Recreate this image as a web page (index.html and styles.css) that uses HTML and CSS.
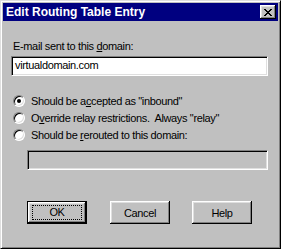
FILE: index.html
```html
<!DOCTYPE html>
<html>
<head>
    <title>Edit Routing Table Entry</title>
<link rel="stylesheet" href="styles.css">
</head>
<body>
    <div class="window">
        <div class="titlebar">
            <span class="title">Edit Routing Table Entry</span>
            <span class="close">
                <svg width="8" height="7" viewBox="0 0 8 7">
                    <path d="M0 0h2v1h1v1h2v-1h1v-1h2v1h-1v1h-1v1h-1v1h1v1h1v1h1v1h-2v-1h-1v-1h-2v1h-1v1h-2v-1h1v-1h1v-1h1v-1h-1v-1h-1v-1h-1z" fill="#000"/>
                </svg>
            </span>
        </div>

        <div class="content">
            <div class="label">E-mail sent to this <u>d</u>omain:</div>
            <div class="field">virtualdomain.com</div>

            <div class="options">
                <div class="option"><span class="radio checked"></span><span>Should be a<u>c</u>cepted as "inbound"</span></div>
                <div class="option"><span class="radio"></span><span>O<u>v</u>erride relay restrictions.&nbsp; Always "relay"</span></div>
                <div class="option"><span class="radio"></span><span>Should be <u>r</u>erouted to this domain:</span></div>
            </div>
            <div class="field disabled"></div>

            <div class="buttons">
                <div class="button default"><span class="focus">OK</span></div>
                <div class="button">Cancel</div>
                <div class="button">Help</div>
            </div>
        </div>
    </div>
</body>
</html>
```

FILE: styles.css
```css
/* Dialog window */
body {
    margin: 0;
    background-color: #c0c0c0;
    font-family: "Liberation Sans", Arial, sans-serif;
    font-size: 11px;
    letter-spacing: -0.35px;
    color: #000;
}

.window {
    width: 281px;
    height: 249px;
    box-sizing: border-box;
    padding: 2px;
    background-color: #c0c0c0;
    border: 1px solid;
    border-color: #dfdfdf #000 #000 #dfdfdf;
    box-shadow: inset 1px 1px #fff, inset -1px -1px #808080;
}

.titlebar {
    height: 18px;
    background-color: #000080;
    color: #fff;
    display: flex;
    align-items: center;
    justify-content: space-between;
    padding: 0 2px 0 3px;
}

.title {
    font-weight: bold;
    font-size: 12px;
    letter-spacing: 0;
}

.close {
    width: 16px;
    height: 14px;
    box-sizing: border-box;
    background-color: #c0c0c0;
    box-shadow: inset -1px -1px #000, inset 1px 1px #fff, inset -2px -2px #808080, inset 2px 2px #dfdfdf;
    display: flex;
    align-items: center;
    justify-content: center;
}

.content {
    padding: 19px 10px 0 8px;
}

.label {
    line-height: 13px;
    margin-left: 2px;
}

/* Text boxes */
.field {
    height: 20px;
    box-sizing: border-box;
    margin-top: 3px;
    padding: 0 3px;
    line-height: 16px;
    background-color: #fff;
    border: 1px solid;
    border-color: #808080 #fff #fff #808080;
    box-shadow: inset 1px 1px #000, inset -1px -1px #dfdfdf;
}

.field.disabled {
    background-color: #c0c0c0;
    margin: 7px 0 0 16px;
}

/* Radio buttons */
.options {
    margin-top: 16px;
}

.option {
    height: 17px;
    display: flex;
    align-items: center;
    gap: 6px;
    padding-left: 2px;
}

.radio {
    width: 12px;
    height: 12px;
    box-sizing: border-box;
    border-radius: 50%;
    background-color: #fff;
    border: 1px solid;
    border-color: #808080 #fff #fff #808080;
    box-shadow: inset 1px 1px #000, inset -1px -1px #dfdfdf;
    display: flex;
    align-items: center;
    justify-content: center;
}

.radio.checked::after {
    content: "";
    width: 4px;
    height: 4px;
    border-radius: 50%;
    background-color: #000;
}

/* Push buttons */
.buttons {
    display: flex;
    gap: 22px;
    margin: 31px 0 0 16px;
}

.button {
    width: 60px;
    height: 23px;
    box-sizing: border-box;
    display: flex;
    align-items: center;
    justify-content: center;
    background-color: #c0c0c0;
    box-shadow: inset -1px -1px #000, inset 1px 1px #fff, inset -2px -2px #808080, inset 2px 2px #dfdfdf;
}

.button.default {
    border: 1px solid #000;
    margin-right: 1px;
}

.focus {
    width: 48px;
    height: 13px;
    line-height: 13px;
    text-align: center;
    outline: 1px dotted #000;
}
```
